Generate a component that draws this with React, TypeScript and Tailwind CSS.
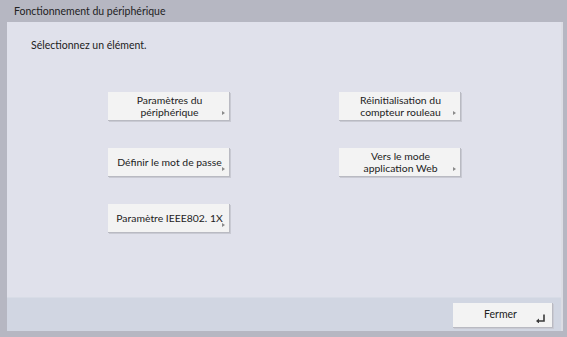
import React from 'react';

const items = [
  ['Paramètres du', 'périphérique'],
  ['Réinitialisation du', 'compteur rouleau'],
  ['Définir le mot de passe'],
  ['Vers le mode', 'application Web'],
  ['Paramètre IEEE802. 1X'],
];

function MenuButton({ lines }: { lines: string[] }) {
  return (
    <div className="relative w-[122px] h-[29px] bg-[#f3f3f3] border-r border-b border-[#b9bac2] shadow-[1px_1px_0_#c9cad3] flex flex-col items-center justify-center text-[10.4px] leading-[12px] text-[#222] pl-[2px]">
      {lines.map((l) => (
        <span key={l}>{l}</span>
      ))}
      <span className="absolute right-[4px] bottom-[5px] w-0 h-0 border-y-[2.5px] border-y-transparent border-l-[3px] border-l-[#8a8a8a]" />
    </div>
  );
}

export default function App() {
  return (
    <div
      className="w-[567px] h-[337px] bg-[#b6b7c2] flex flex-col overflow-hidden"
      style={{ fontFamily: 'Lato, "Noto Sans", sans-serif' }}
    >
      <div className="h-[22px] pl-[14px] pt-[5px] text-[10.5px] leading-[13px] text-[#222]">
        Fonctionnement du périphérique
      </div>
      <div className="flex-1 ml-[7px] mr-[4px] mb-[6px] flex flex-col border-r-2 border-[#dcdde4]">
        <div className="flex-1 bg-[#e0e1eb] pt-[17px] pl-[24px]">
          <div className="text-[10.5px] leading-[13px] text-[#222]">Sélectionnez un élément.</div>
          <div className="grid grid-cols-[122px_122px] gap-x-[109px] gap-y-[27px] mt-[40px] ml-[77px]">
            {items.map((it) => (
              <MenuButton key={it.join(' ')} lines={it} />
            ))}
          </div>
        </div>
        <div className="h-[34px] bg-[#d1d6e2] border-t border-[#d8dce6] flex justify-end items-start pt-[5px] pr-[8px]">
          <div className="relative w-[100px] h-[25px] bg-[#f3f3f3] border-r border-b border-[#b9bac2] shadow-[1px_1px_0_#c9cad3] flex items-center justify-center text-[10.5px] text-[#222] pr-[4px]">
            Fermer
            <svg className="absolute right-[6px] bottom-[4px]" width="11" height="9" viewBox="0 0 11 9">
              <path d="M9 0.5 V7 H3" stroke="#3a3a3a" strokeWidth="1.6" fill="none" />
              <path d="M1 7 L4 4.5 V9.5 Z" fill="#3a3a3a" />
            </svg>
          </div>
        </div>
      </div>
    </div>
  );
}
